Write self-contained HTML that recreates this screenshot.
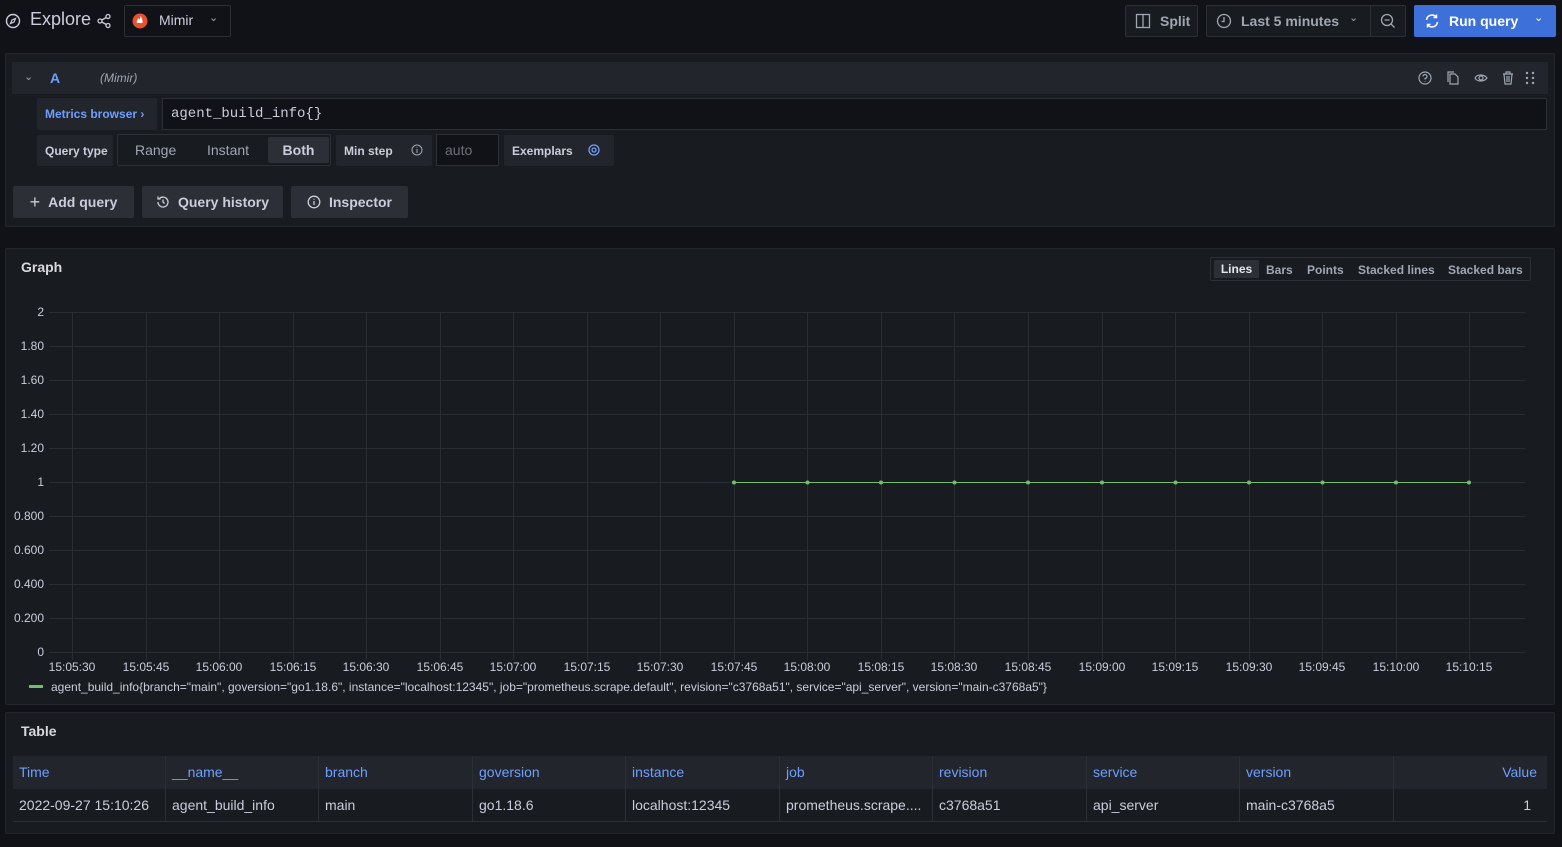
<!DOCTYPE html>
<html><head><meta charset="utf-8"><style>
*{box-sizing:border-box;margin:0;padding:0}
body{width:1562px;height:847px;background:#111217;font-family:"Liberation Sans",sans-serif;color:#ccccdc;position:relative;overflow:hidden;font-size:14px}
.a{position:absolute}
.btn{position:absolute;background:#2c2f36;border-radius:2px;color:#ccccdc;font-weight:bold;font-size:14px;display:flex;align-items:center;justify-content:center;gap:8px}
.lbl{position:absolute;background:#22252b;font-weight:bold;font-size:12px;color:#ccccdc;display:flex;align-items:center;border-radius:2px}
.tb th,.tb td{position:absolute}
.hc{position:absolute;top:756px;height:33px;background:#22252b;color:#6e9fff;font-size:14px;line-height:33px;padding-left:6px;border-right:1px solid #2c2f36}
.dc{position:absolute;top:789px;height:33px;color:#ccccdc;font-size:14px;line-height:33px;padding-left:6px;border-right:1px solid #2c2f36;border-bottom:1px solid #2c2f36}
</style></head><body>
<!-- top bar -->
<svg class="a" style="left:5px;top:13px" width="16" height="16" viewBox="0 0 16 16"><circle cx="8" cy="8" r="6.5" fill="none" stroke="#ccccdc" stroke-width="1.4"/><path d="M10.5 5.5 L9 9 L5.5 10.5 L7 7Z" fill="none" stroke="#ccccdc" stroke-width="1.2"/></svg>
<div class="a" style="left:30px;top:9px;font-size:18px;color:#ccccdc">Explore</div>
<svg class="a" style="left:96px;top:13px" width="16" height="16" viewBox="0 0 16 16" fill="none" stroke="#ccccdc" stroke-width="1.3"><circle cx="12" cy="3.5" r="2"/><circle cx="4" cy="8" r="2"/><circle cx="12" cy="12.5" r="2"/><path d="M5.8 7 L10.2 4.5 M5.8 9 L10.2 11.5"/></svg>
<div class="a" style="left:124px;top:5px;width:107px;height:32px;border:1px solid #2c2f36;border-radius:2px"></div>
<svg class="a" style="left:132px;top:13px" width="16" height="16" viewBox="0 0 16 16"><circle cx="8" cy="8" r="7.5" fill="#e6522c"/><path d="M5 11h6M5.5 12.5h5M5 10c-1-2 1-3 1-5 1 1 1 2 2 1 0-1 0-2 1-3 0 2 2 3 1.5 7z" fill="#fff"/></svg>
<div class="a" style="left:159px;top:12px;font-size:14px">Mimir</div>
<div class="a" style="left:209px;top:11px;font-size:11px;color:#9fa7b3">⌄</div>

<div class="a" style="left:1125px;top:5px;width:73px;height:32px;border:1px solid #2c2f36;background:#181b1f;border-radius:2px"></div>
<svg class="a" style="left:1135px;top:13px" width="16" height="16" viewBox="0 0 16 16" fill="none" stroke="#9fa7b3" stroke-width="1.3"><rect x="1.5" y="1.5" width="13" height="13"/><path d="M8 1.5v13"/></svg>
<div class="a" style="left:1160px;top:13px;font-weight:bold;color:#9fa7b3">Split</div>
<div class="a" style="left:1206px;top:5px;width:200px;height:32px;border:1px solid #2c2f36;background:#181b1f;border-radius:2px"></div>
<div class="a" style="left:1370px;top:5px;width:1px;height:32px;background:#2c2f36"></div>
<svg class="a" style="left:1216px;top:13px" width="16" height="16" viewBox="0 0 16 16" fill="none" stroke="#9fa7b3" stroke-width="1.3"><circle cx="8" cy="8" r="6.5"/><path d="M8 4v4.5H5.5"/></svg>
<div class="a" style="left:1241px;top:13px;font-weight:bold;color:#9fa7b3">Last 5 minutes</div>
<div class="a" style="left:1349px;top:11px;font-size:11px;color:#9fa7b3">⌄</div>
<svg class="a" style="left:1380px;top:13px" width="16" height="16" viewBox="0 0 16 16" fill="none" stroke="#9fa7b3" stroke-width="1.3"><circle cx="7" cy="7" r="5.5"/><path d="M4.5 7h5M11 11l3.5 3.5"/></svg>
<div class="a" style="left:1414px;top:5px;width:142px;height:32px;background:#3d71d9;border-radius:2px"></div>
<svg class="a" style="left:1424px;top:13px" width="16" height="16" viewBox="0 0 16 16" fill="none" stroke="#fff" stroke-width="1.5"><path d="M2.5 7a5.5 5.5 0 0 1 10-2.5M13.5 9a5.5 5.5 0 0 1-10 2.5M12.5 1.5v3h-3M3.5 14.5v-3h3"/></svg>
<div class="a" style="left:1449px;top:13px;font-weight:bold;color:#fff">Run query</div>
<div class="a" style="left:1534px;top:11px;font-size:11px;color:#fff">⌄</div>

<!-- query panel -->
<div class="a" style="left:5px;top:53px;width:1550px;height:174px;background:#181b1f;border:1px solid #22252b;border-radius:2px"></div>
<div class="a" style="left:12px;top:62px;width:1536px;height:32px;background:#22252b"></div>
<div class="a" style="left:24px;top:70px;font-size:11px;color:#9fa7b3">⌄</div>
<div class="a" style="left:50px;top:70px;font-weight:bold;color:#6e9fff">A</div>
<div class="a" style="left:100px;top:71px;font-size:12px;font-style:italic;color:#9fa7b3">(Mimir)</div>
<svg class="a" style="left:1417px;top:70px" width="130" height="16" viewBox="0 0 130 16" fill="none" stroke="#9fa7b3" stroke-width="1.2"><circle cx="8" cy="8" r="6"/><path d="M6 6.5a2 2 0 1 1 2 2v1M8 11v.5"/><path d="M33 4h5l3 3v7h-8zM31 12V2h6"/><path d="M58 8c2-4 9-4 12 0c-3 4-10 4-12 0z"/><circle cx="64" cy="8" r="2"/><path d="M86 4h10M89 4V2h4v2M87 4l1 10h6l1-10M90 6v6M92 6v6"/><g fill="#9fa7b3" stroke="none"><circle cx="110" cy="3" r="1.2"/><circle cx="116" cy="3" r="1.2"/><circle cx="110" cy="8" r="1.2"/><circle cx="116" cy="8" r="1.2"/><circle cx="110" cy="13" r="1.2"/><circle cx="116" cy="13" r="1.2"/></g></svg>

<div class="lbl" style="left:37px;top:98px;width:120px;height:32px;padding-left:8px;color:#6e9fff">Metrics browser ›</div>
<div class="a" style="left:162px;top:98px;width:1385px;height:32px;background:#111217;border:1px solid #2c2f36;font-family:'Liberation Mono',monospace;font-size:14px;line-height:30px;padding-left:8px;color:#ccccdc">agent_build_info{}</div>

<div class="lbl" style="left:37px;top:135px;width:76px;height:31px;padding-left:8px">Query type</div>
<div class="a" style="left:117px;top:134px;width:214px;height:32px;border:1px solid #2c2f36;border-radius:2px"></div>
<div class="a" style="left:135px;top:142px;color:#9fa7b3">Range</div>
<div class="a" style="left:207px;top:142px;color:#9fa7b3">Instant</div>
<div class="a" style="left:268px;top:137px;width:61px;height:26px;background:#2c2f36;border-radius:2px;font-weight:bold;text-align:center;line-height:26px">Both</div>
<div class="lbl" style="left:336px;top:135px;width:96px;height:31px;padding-left:8px">Min step</div>
<svg class="a" style="left:411px;top:144px" width="12" height="12" viewBox="0 0 12 12" fill="none" stroke="#9fa7b3"><circle cx="6" cy="6" r="5"/><path d="M6 5v4M6 3v.8"/></svg>
<div class="a" style="left:436px;top:134px;width:63px;height:32px;background:#111217;border:1px solid #2c2f36;line-height:30px;padding-left:8px;color:#6e7079">auto</div>
<div class="lbl" style="left:504px;top:135px;width:110px;height:31px;padding-left:8px">Exemplars</div>
<svg class="a" style="left:587px;top:144px" width="14" height="12" viewBox="0 0 14 12" fill="none" stroke="#6e9fff" stroke-width="1.3"><circle cx="7" cy="6" r="5"/><circle cx="7" cy="6" r="2"/></svg>

<div class="btn" style="left:13px;top:186px;width:121px;height:32px"><span style="font-size:18px;font-weight:normal">+</span>Add query</div>
<div class="btn" style="left:142px;top:186px;width:141px;height:32px"><svg width="14" height="14" viewBox="0 0 14 14" fill="none" stroke="#ccccdc" stroke-width="1.3"><path d="M2 7a5 5 0 1 0 1.5-3.5M2 1.5V4h2.5M7 4.5V7l1.5 1.5"/></svg>Query history</div>
<div class="btn" style="left:291px;top:186px;width:117px;height:32px"><svg width="14" height="14" viewBox="0 0 14 14" fill="none" stroke="#ccccdc" stroke-width="1.3"><circle cx="7" cy="7" r="5.8"/><path d="M7 6v4M7 3.8v.8"/></svg>Inspector</div>

<!-- graph panel -->
<div class="a" style="left:5px;top:248px;width:1550px;height:457px;background:#181b1f;border:1px solid #22252b;border-radius:2px"></div>
<div class="a" style="left:21px;top:259px;font-weight:bold;font-size:14px;color:#d8d9e0">Graph</div>
<div class="a" style="left:1210px;top:257px;width:321px;height:24px;border:1px solid #2c2f36;border-radius:2px;font-size:12px;font-weight:bold;color:#9fa7b3">
<span class="a" style="left:3px;top:2px;width:45px;height:18px;background:#2c2f36;color:#e6e6ec;text-align:center;line-height:18px">Lines</span>
<span class="a" style="left:55px;top:5px">Bars</span><span class="a" style="left:96px;top:5px">Points</span><span class="a" style="left:147px;top:5px">Stacked lines</span><span class="a" style="left:237px;top:5px">Stacked bars</span></div>
<svg class="a" style="left:0;top:0" width="1562" height="700" font-family="Liberation Sans" font-size="12" fill="#ccccdc">
<g stroke="#2a2d33" stroke-width="1">
<path d="M49 312.5H1525M49 346.5H1525M49 380.5H1525M49 414.5H1525M49 448.5H1525M49 482.5H1525M49 516.5H1525M49 550.5H1525M49 584.5H1525M49 618.5H1525M49 652.5H1525"/>
<path d="M72.5 312V660M146.5 312V660M219.5 312V660M293.5 312V660M366.5 312V660M440.5 312V660M513.5 312V660M587.5 312V660M660.5 312V660M734.5 312V660M807.5 312V660M881.5 312V660M954.5 312V660M1028.5 312V660M1102.5 312V660M1175.5 312V660M1249.5 312V660M1322.5 312V660M1396.5 312V660M1469.5 312V660"/>
</g>
<g text-anchor="end"><text x="44" y="316">2</text><text x="44" y="350">1.80</text><text x="44" y="384">1.60</text><text x="44" y="418">1.40</text><text x="44" y="452">1.20</text><text x="44" y="486">1</text><text x="44" y="520">0.800</text><text x="44" y="554">0.600</text><text x="44" y="588">0.400</text><text x="44" y="622">0.200</text><text x="44" y="656">0</text></g>
<g text-anchor="middle"><text x="72" y="671">15:05:30</text><text x="146" y="671">15:05:45</text><text x="219" y="671">15:06:00</text><text x="293" y="671">15:06:15</text><text x="366" y="671">15:06:30</text><text x="440" y="671">15:06:45</text><text x="513" y="671">15:07:00</text><text x="587" y="671">15:07:15</text><text x="660" y="671">15:07:30</text><text x="734" y="671">15:07:45</text><text x="807" y="671">15:08:00</text><text x="881" y="671">15:08:15</text><text x="954" y="671">15:08:30</text><text x="1028" y="671">15:08:45</text><text x="1102" y="671">15:09:00</text><text x="1175" y="671">15:09:15</text><text x="1249" y="671">15:09:30</text><text x="1322" y="671">15:09:45</text><text x="1396" y="671">15:10:00</text><text x="1469" y="671">15:10:15</text></g>
<path d="M734 482.5H1469" stroke="#73bf69" stroke-width="1"/>
<g fill="#73bf69"><circle cx="734" cy="482.5" r="2"/><circle cx="807.5" cy="482.5" r="2"/><circle cx="881" cy="482.5" r="2"/><circle cx="954.5" cy="482.5" r="2"/><circle cx="1028" cy="482.5" r="2"/><circle cx="1102" cy="482.5" r="2"/><circle cx="1175.5" cy="482.5" r="2"/><circle cx="1249" cy="482.5" r="2"/><circle cx="1322.5" cy="482.5" r="2"/><circle cx="1396" cy="482.5" r="2"/><circle cx="1469" cy="482.5" r="2"/></g>
<rect x="29" y="685" width="14" height="3" fill="#73bf69"/>
<text x="51" y="691">agent_build_info{branch="main", goversion="go1.18.6", instance="localhost:12345", job="prometheus.scrape.default", revision="c3768a51", service="api_server", version="main-c3768a5"}</text>
</svg>

<!-- table panel -->
<div class="a" style="left:5px;top:712px;width:1550px;height:122px;background:#181b1f;border:1px solid #22252b;border-radius:2px"></div>
<div class="a" style="left:21px;top:723px;font-weight:bold;color:#d8d9e0">Table</div>
<div class="hc" style="left:13px;width:153px">Time</div><div class="hc" style="left:166px;width:153px">__name__</div><div class="hc" style="left:319px;width:154px">branch</div><div class="hc" style="left:473px;width:153px">goversion</div><div class="hc" style="left:626px;width:154px">instance</div><div class="hc" style="left:780px;width:153px">job</div><div class="hc" style="left:933px;width:154px">revision</div><div class="hc" style="left:1087px;width:153px">service</div><div class="hc" style="left:1240px;width:154px">version</div><div class="hc" style="left:1394px;width:153px;text-align:right;padding-right:10px;border-right:none">Value</div>
<div class="dc" style="left:13px;width:153px">2022-09-27 15:10:26</div><div class="dc" style="left:166px;width:153px">agent_build_info</div><div class="dc" style="left:319px;width:154px">main</div><div class="dc" style="left:473px;width:153px">go1.18.6</div><div class="dc" style="left:626px;width:154px">localhost:12345</div><div class="dc" style="left:780px;width:153px">prometheus.scrape....</div><div class="dc" style="left:933px;width:154px">c3768a51</div><div class="dc" style="left:1087px;width:153px">api_server</div><div class="dc" style="left:1240px;width:154px">main-c3768a5</div><div class="dc" style="left:1394px;width:153px;text-align:right;padding-right:16px;border-right:none">1</div>
</body></html>
